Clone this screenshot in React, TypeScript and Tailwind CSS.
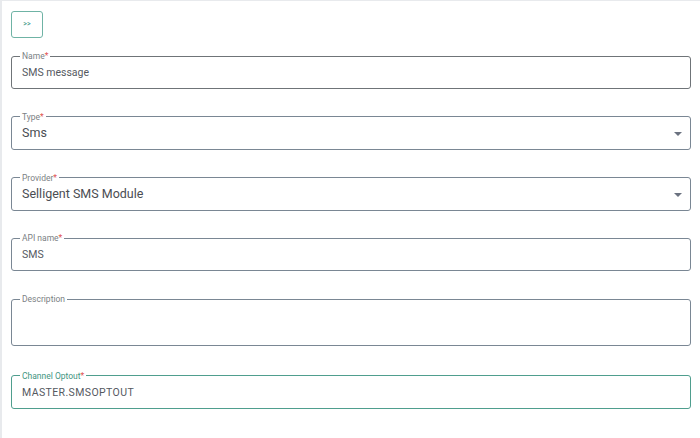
import React from "react";

type Field = {
    label: string;
    value?: string;
    required?: boolean;
    select?: boolean;
    big?: boolean;
    tall?: boolean;
    active?: boolean;
    tracking?: boolean;
};

const fields: Field[] = [
    { label: "Name", value: "SMS message", required: true },
    { label: "Type", value: "Sms", required: true, select: true, big: true },
    { label: "Provider", value: "Selligent SMS Module", required: true, select: true, big: true },
    { label: "API name", value: "SMS", required: true },
    { label: "Description", tall: true },
    { label: "Channel Optout", value: "MASTER.SMSOPTOUT", required: true, active: true, tracking: true },
];

function FormField({ field }: { field: Field }) {
    const border = field.active
        ? "border-[#4f9e8e] mt-[2px]"
        : field.label === "Name"
        ? "border-[#6f7478]"
        : "border-[#7a8794]";
    return (
        <fieldset className={`border ${border} rounded-[3px] px-[10px]`}>
            <legend
                className={`ml-[-2px] px-[2px] text-[8.5px] leading-[10px] ${
                    field.active ? "text-[#3f9582]" : "text-[#7b7f84]"
                }`}
            >
                {field.label}
                {field.required && <span className="text-[#e0524f]">*</span>}
            </legend>
            <div
                className={`flex items-center justify-between ${
                    field.tall ? "h-[41px]" : "h-[27px] pb-[3px]"
                }`}
            >
                <span
                    className={`${
                        field.big
                            ? "text-[12.5px] text-[#4a4d52]"
                            : "text-[10.5px] text-[#55595f]"
                    } ${field.tracking ? "tracking-[0.4px]" : ""}`}
                >
                    {field.value}
                </span>
                {field.select && (
                    <svg width="8" height="4" viewBox="0 0 8 4" className="mr-[-2px]">
                        <path d="M0 0 L8 0 L4 4 Z" fill="#6b7280" />
                    </svg>
                )}
            </div>
        </fieldset>
    );
}

export default function App() {
    return (
        <div
            className="w-[700px] h-[438px] bg-white border-t border-l-2 border-[#e8eaed] px-[9px] pt-[10px]"
            style={{ fontFamily: "Roboto, 'Noto Sans', sans-serif" }}
        >
            <button className="w-[32px] h-[27px] border border-[#6fb3a5] rounded-[3px] flex items-center justify-center text-[7px] text-[#4f9e8e] font-medium">
                &gt;&gt;
            </button>
            <div className="flex flex-col gap-[22.75px] mt-[13px] w-[680px]">
                {fields.map((f) => (
                    <FormField key={f.label} field={f} />
                ))}
            </div>
        </div>
    );
}
